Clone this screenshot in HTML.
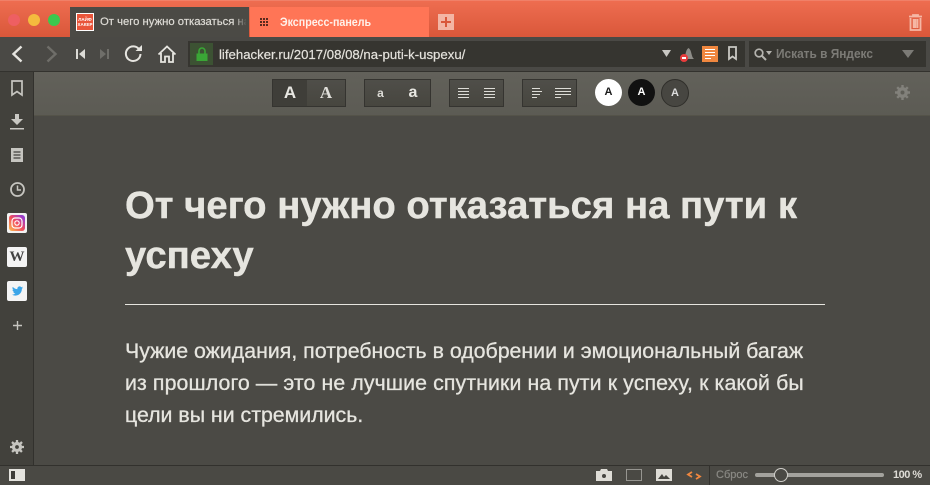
<!DOCTYPE html>
<html><head><meta charset="utf-8"><style>
html,body{margin:0;padding:0;width:930px;height:485px;overflow:hidden;background:#4b4a45;font-family:"Liberation Sans",sans-serif}
.a{position:absolute;white-space:nowrap}
svg{position:absolute;display:block;overflow:visible}
.grp{position:absolute;top:79px;height:26px;border:1px solid #353430;background:linear-gradient(#4f4e49,#47463f);box-sizing:content-box}
</style></head><body>
<div class="a" style="left:0;top:0;width:930px;height:37px;background:linear-gradient(#ee6d50,#d9573a);border-top:1px solid #f08068;box-sizing:border-box"></div>
<div class="a" style="left:8px;top:14px;width:12px;height:12px;border-radius:50%;background:#ee5f62"></div>
<div class="a" style="left:28px;top:14px;width:12px;height:12px;border-radius:50%;background:#f4bb3e"></div>
<div class="a" style="left:48px;top:14px;width:12px;height:12px;border-radius:50%;background:#3cc84e"></div>
<div class="a" style="left:70px;top:7px;width:179px;height:30px;background:#4b4a45;overflow:hidden"></div>
<div class="a" style="left:76px;top:13px;width:18px;height:18px;background:#e9553a;border:1px solid #fff;box-sizing:border-box;color:#fff;font:bold 4.500px/5px 'Liberation Sans',sans-serif;text-align:center;padding-top:3px">ЛАЙФ<br>ХАКЕР</div>
<div class="a" style="left:100px;top:15px;width:146px;overflow:hidden;font-size:11.300px;line-height:15px;color:#dedcd6;-webkit-text-stroke:.2px #dedcd6">От чего нужно отказаться на пути</div>
<div class="a" style="left:234px;top:7px;width:15px;height:30px;background:linear-gradient(90deg,rgba(75,74,69,0),#4b4a45 85%)"></div>
<div class="a" style="left:250px;top:7px;width:179px;height:30px;background:#ff7556"></div>
<svg style="left:260px;top:18px" width="9" height="9"><g fill="#5a2a1e"><rect width="2" height="2"/><rect x="3" width="2" height="2"/><rect x="6" width="2" height="2"/><rect y="3" width="2" height="2"/><rect x="3" y="3" width="2" height="2"/><rect x="6" y="3" width="2" height="2"/><rect y="6" width="2" height="2"/><rect x="3" y="6" width="2" height="2"/><rect x="6" y="6" width="2" height="2"/></g></svg>
<div class="a" style="left:280px;top:15px;font-size:12px;line-height:15px;font-weight:bold;color:#fff1ea;transform:scaleX(.89);transform-origin:0 0">Экспресс-панель</div>
<div class="a" style="left:438px;top:14px;width:16px;height:16px;background:#f3b5a4"></div>
<div class="a" style="left:441px;top:21px;width:10px;height:2px;background:#d9573a"></div>
<div class="a" style="left:445px;top:17px;width:2px;height:10px;background:#d9573a"></div>
<svg style="left:908px;top:14px" width="15" height="17"><g fill="none" stroke="#f5b7a5" stroke-width="1.800"><path d="M1 2.500H14M5 2.500V1H10V2.500M2.500 4V16H12.500V4M5.700 5V14M7.500 5V14M9.500 5V14"/></g></svg>

<div class="a" style="left:0;top:37px;width:930px;height:34px;background:#4a4945"></div>
<svg style="left:11px;top:45px" width="13" height="18"><path d="M10.500 1.500L2.500 9L10.500 16.500" fill="none" stroke="#e6e5e0" stroke-width="2.400"/></svg>
<svg style="left:45px;top:45px" width="13" height="18"><path d="M2.500 1.500L10.500 9L2.500 16.500" fill="none" stroke="#6f6e69" stroke-width="2.400"/></svg>
<svg style="left:76px;top:48px" width="10" height="12"><path d="M0 1H2V11H0ZM9 1V11L3 6Z" fill="#dcdbd6"/></svg>
<svg style="left:100px;top:48px" width="10" height="12"><path d="M9 1H7V11H9ZM0 1V11L6 6Z" fill="#6f6e69"/></svg>
<svg style="left:124px;top:45px" width="19" height="18"><path d="M15.500 5A7.300 7.300 0 1 0 16.500 9" fill="none" stroke="#e6e5e0" stroke-width="2"/><path d="M11.500 6H18V0Z" fill="#e6e5e0"/></svg>
<svg style="left:157px;top:45px" width="20" height="18"><path d="M1.500 9.500L10 1.500L18.500 9.500M4 8V17H8V11.500H12V17H16V8" fill="none" stroke="#e6e5e0" stroke-width="1.800"/></svg>

<div class="a" style="left:188px;top:41px;width:557px;height:26px;background:#363530"></div>
<div class="a" style="left:190px;top:43px;width:23px;height:22px;background:#3c5233"></div>
<svg style="left:195px;top:47px" width="14" height="14"><path d="M1.500 6.500H12.500V14H1.500Z" fill="#3aa636"/><path d="M4 7V4A3 3 0 0 1 10 4V7" fill="none" stroke="#3aa636" stroke-width="1.600"/></svg>
<div class="a" style="left:219px;top:46px;font-size:13.200px;line-height:17px;color:#e4e2dc;-webkit-text-stroke:.2px #e4e2dc">lifehacker.ru/2017/08/08/na-puti-k-uspexu/</div>
<svg style="left:662px;top:50px" width="9" height="7"><path d="M0 0H9L4.500 7Z" fill="#c9c8c3"/></svg>
<svg style="left:682px;top:47px" width="14" height="14"><path d="M1.500 12C4 10 3 3 6.500 1C10 3 9 10 12 12Z" fill="#8e8d88"/></svg>
<div class="a" style="left:680px;top:54px;width:8px;height:8px;border-radius:50%;background:#e83c3c"></div>
<div class="a" style="left:682px;top:57px;width:4px;height:2px;background:#fff"></div>
<div class="a" style="left:702px;top:46px;width:16px;height:16px;background:#f0873f"></div>
<svg style="left:705px;top:49px" width="10" height="10"><path d="M0 .5H10M0 3.500H10M0 6.500H10M0 9.500H6" stroke="#fff" stroke-width="1"/></svg>
<svg style="left:728px;top:46px" width="9" height="14"><path d="M1 1H8V13L4.500 10.500L1 13Z" fill="none" stroke="#c9c8c3" stroke-width="1.800"/></svg>

<div class="a" style="left:749px;top:41px;width:177px;height:26px;background:#363530"></div>
<svg style="left:754px;top:48px" width="18" height="13"><circle cx="5" cy="5" r="3.800" fill="none" stroke="#b5b4af" stroke-width="1.700"/><path d="M8 8L12 12" stroke="#b5b4af" stroke-width="2"/><path d="M12 3H18L15 7Z" fill="#b5b4af"/></svg>
<div class="a" style="left:776px;top:46px;font-size:12.500px;line-height:16px;font-weight:bold;color:#7c7b76;transform:scaleX(.95);transform-origin:0 0">Искать в Яндекс</div>
<svg style="left:902px;top:50px" width="12" height="8"><path d="M0 0H12L6 8Z" fill="#7c7b76"/></svg>

<div class="a" style="left:0;top:71px;width:930px;height:1px;background:#33322e"></div>
<div class="a" style="left:0;top:72px;width:33px;height:393px;background:#42413c"></div>
<div class="a" style="left:33px;top:72px;width:1px;height:393px;background:#32312d"></div>
<div class="a" style="left:34px;top:72px;width:896px;height:43px;background:linear-gradient(#62615a,#5c5b54)"></div>
<div class="a" style="left:34px;top:115px;width:896px;height:1px;background:#545349"></div>

<div class="grp" style="left:272px;width:35px;background:#3f3e39"></div>
<div class="grp" style="left:307px;width:38px;border-left:0"></div>
<div class="a" style="left:272px;top:80px;width:36px;text-align:center;font:bold 17px/26px 'Liberation Sans',sans-serif;color:#e8e7e2">A</div>
<div class="a" style="left:307px;top:80px;width:38px;text-align:center;font:bold 17px/26px 'Liberation Serif',serif;color:#e0dfda">A</div>
<div class="grp" style="left:364px;width:65px"></div>
<div class="a" style="left:364px;top:80px;width:33px;text-align:center;font:bold 12px/27px 'Liberation Sans',sans-serif;color:#dddcd7">a</div>
<div class="a" style="left:396px;top:80px;width:34px;text-align:center;font:bold 16px/26px 'Liberation Sans',sans-serif;color:#e8e7e2">a</div>
<div class="grp" style="left:449px;width:53px"></div>
<svg style="left:458px;top:88px" width="36" height="10"><path d="M0 .5H11M0 3.500H11M0 6.500H11M0 9.500H11M26 .5H37M26 3.500H37M26 6.500H37M26 9.500H37" stroke="#dddcd7"/></svg>
<div class="grp" style="left:522px;width:53px"></div>
<svg style="left:532px;top:88px" width="40" height="10"><path d="M0 .5H8M0 3.500H10M0 6.500H8M0 9.500H5M23 .5H39M23 3.500H39M23 6.500H39M23 9.500H29" stroke="#dddcd7"/></svg>
<div class="a" style="left:595px;top:79px;width:27px;height:27px;border-radius:50%;background:#fff;text-align:center;font:bold 11px/27px 'Liberation Sans',sans-serif;color:#1a1a1a">A</div>
<div class="a" style="left:628px;top:79px;width:27px;height:27px;border-radius:50%;background:#111;text-align:center;font:bold 11px/27px 'Liberation Sans',sans-serif;color:#fff">A</div>
<div class="a" style="left:661px;top:79px;width:26px;height:26px;border-radius:50%;background:#474641;border:1px solid #2f2e2a;text-align:center;font:bold 11px/26px 'Liberation Sans',sans-serif;color:#ddd">A</div>
<svg style="left:895px;top:85px" width="15" height="15"><circle cx="7.500" cy="7.500" r="3.700" fill="none" stroke="#82817b" stroke-width="3.400"/><path d="M7.500 0V15M0 7.500H15M2.200 2.200L12.800 12.800M12.800 2.200L2.200 12.800" stroke="#82817b" stroke-width="2.400" stroke-dasharray="2.500 10 2.500"/></svg>

<svg style="left:11px;top:80px" width="12" height="16"><path d="M1 1H11V15L6 11.500L1 15Z" fill="none" stroke="#c6c5c0" stroke-width="1.700"/></svg>
<svg style="left:10px;top:114px" width="14" height="16"><path d="M5 0H9V5H13L7 11L1 5H5ZM0 14H14V15.500H0Z" fill="#c9c8c3"/></svg>
<svg style="left:11px;top:148px" width="12" height="14"><path d="M0 0H12V14H0Z" fill="#c6c5c0"/><path d="M2.500 4H9.500M2.500 7H9.500M2.500 10H9.500" stroke="#42413c" stroke-width="1.200"/></svg>
<svg style="left:10px;top:182px" width="15" height="15"><circle cx="7.500" cy="7.500" r="6.500" fill="none" stroke="#c6c5c0" stroke-width="1.800"/><path d="M7.500 3.500V8H11" fill="none" stroke="#c6c5c0" stroke-width="1.500"/></svg>

<div class="a" style="left:7px;top:213px;width:20px;height:20px;border-radius:2px;background:#f2f2f2"></div>
<div class="a" style="left:9px;top:215px;width:16px;height:16px;border-radius:3px;background:linear-gradient(45deg,#fcc14e,#f04a5e 50%,#a03cc8 85%,#7a4ad0)"></div>
<svg style="left:11px;top:217px" width="12" height="12"><rect x="1" y="1" width="10" height="10" rx="3" fill="none" stroke="#fff" stroke-width="1.200"/><circle cx="6" cy="6" r="2.200" fill="none" stroke="#fff" stroke-width="1.100"/></svg>
<div class="a" style="left:7px;top:247px;width:20px;height:20px;border-radius:2px;background:#f4f4f4;text-align:center;font:bold 15px/20px 'Liberation Serif',serif;color:#444">W</div>
<div class="a" style="left:7px;top:281px;width:20px;height:20px;border-radius:2px;background:#f4f4f4"></div>
<svg style="left:12px;top:286px" width="11" height="10" viewBox="0 0 24 20"><path d="M24 2.400c-.9.400-1.800.700-2.800.800 1-.6 1.800-1.600 2.200-2.700-1 .6-2 1-3.100 1.200C19.300.600 18 0 16.600 0c-3.200 0-5.500 3-4.800 6C7.700 5.800 4.100 3.800 1.700.9.400 3.100 1 6 3.200 7.500c-.8 0-1.600-.2-2.200-.6 0 2.300 1.600 4.400 4 4.900-.7.200-1.500.2-2.200.1.600 2 2.400 3.400 4.600 3.400C5.300 17.500 2.700 18.200 0 17.900 2.200 19.300 4.800 20 7.500 20c9.100 0 14.300-7.700 14-14.600 1-.7 1.800-1.600 2.500-3z" fill="#3ba5e8"/></svg>
<svg style="left:13px;top:321px" width="9" height="9"><path d="M3.800 0H5.200V3.800H9V5.200H5.200V9H3.800V5.200H0V3.800H3.800Z" fill="#c6c5c0"/></svg>
<svg style="left:10px;top:440px" width="14" height="14"><circle cx="7" cy="7" r="3.500" fill="none" stroke="#c6c5c0" stroke-width="3.200"/><path d="M7 0V14M0 7H14M2 2L12 12M12 2L2 12" stroke="#c6c5c0" stroke-width="2.300" stroke-dasharray="2.300 9.400 2.300"/></svg>

<h1 class="a" style="margin:0;left:125px;top:181px;font-size:38.300px;line-height:50px;font-weight:bold;color:#e6e5df;-webkit-text-stroke:.4px #e6e5df">От чего нужно отказаться на пути к<br>успеху</h1>
<div class="a" style="left:125px;top:304px;width:700px;height:1px;background:#e6e5df"></div>
<p class="a" style="margin:0;left:125px;top:335px;font-size:21.320px;line-height:32px;color:#e6e5df;-webkit-text-stroke:.3px #e6e5df">Чужие ожидания, потребность в одобрении и эмоциональный багаж<br><span style="letter-spacing:.11px">из прошлого — это не лучшие спутники на пути к успеху, к какой бы</span><br>цели вы ни стремились.</p>

<div class="a" style="left:0;top:465px;width:930px;height:20px;background:#4a4944;border-top:1px solid #32312d;box-sizing:border-box"></div>
<div class="a" style="left:9px;top:469px;width:16px;height:12px;background:#e4e3de"></div>
<div class="a" style="left:11px;top:471px;width:4px;height:8px;background:#3d3c38"></div>
<svg style="left:596px;top:469px" width="16" height="12"><path d="M0 2H4L5 0H11L12 2H16V12H0Z" fill="#dedcd6"/><circle cx="8" cy="7" r="2" fill="#45443f"/></svg>
<div class="a" style="left:626px;top:469px;width:16px;height:12px;border:1.500px solid #969590;box-sizing:border-box"></div>
<div class="a" style="left:656px;top:469px;width:16px;height:12px;background:#dedcd6"></div>
<svg style="left:656px;top:472px" width="16" height="9"><path d="M2 7L6 2L8 5L10 3L14 7Z" fill="#45443f"/></svg>
<svg style="left:686px;top:471px" width="16" height="9"><path d="M6 1L2 3.500L6 6M10 3L14 5.500L10 8" fill="none" stroke="#f0873f" stroke-width="1.800"/></svg>
<div class="a" style="left:709px;top:465px;width:1px;height:20px;background:#33322e"></div>
<div class="a" style="left:716px;top:468px;font-size:11px;line-height:14px;color:#8a8984;-webkit-text-stroke:.2px #8a8984">Сброс</div>
<div class="a" style="left:755px;top:473px;width:129px;height:4px;border-radius:2px;background:#a3a29d"></div>
<div class="a" style="left:774px;top:468px;width:14px;height:14px;border-radius:50%;background:#4a4944;border:1.500px solid #cfcec9;box-sizing:border-box"></div>
<div class="a" style="left:893px;top:468px;font-size:11px;line-height:14px;font-weight:bold;color:#dedcd6;letter-spacing:-.5px">100 %</div>
</body></html>
